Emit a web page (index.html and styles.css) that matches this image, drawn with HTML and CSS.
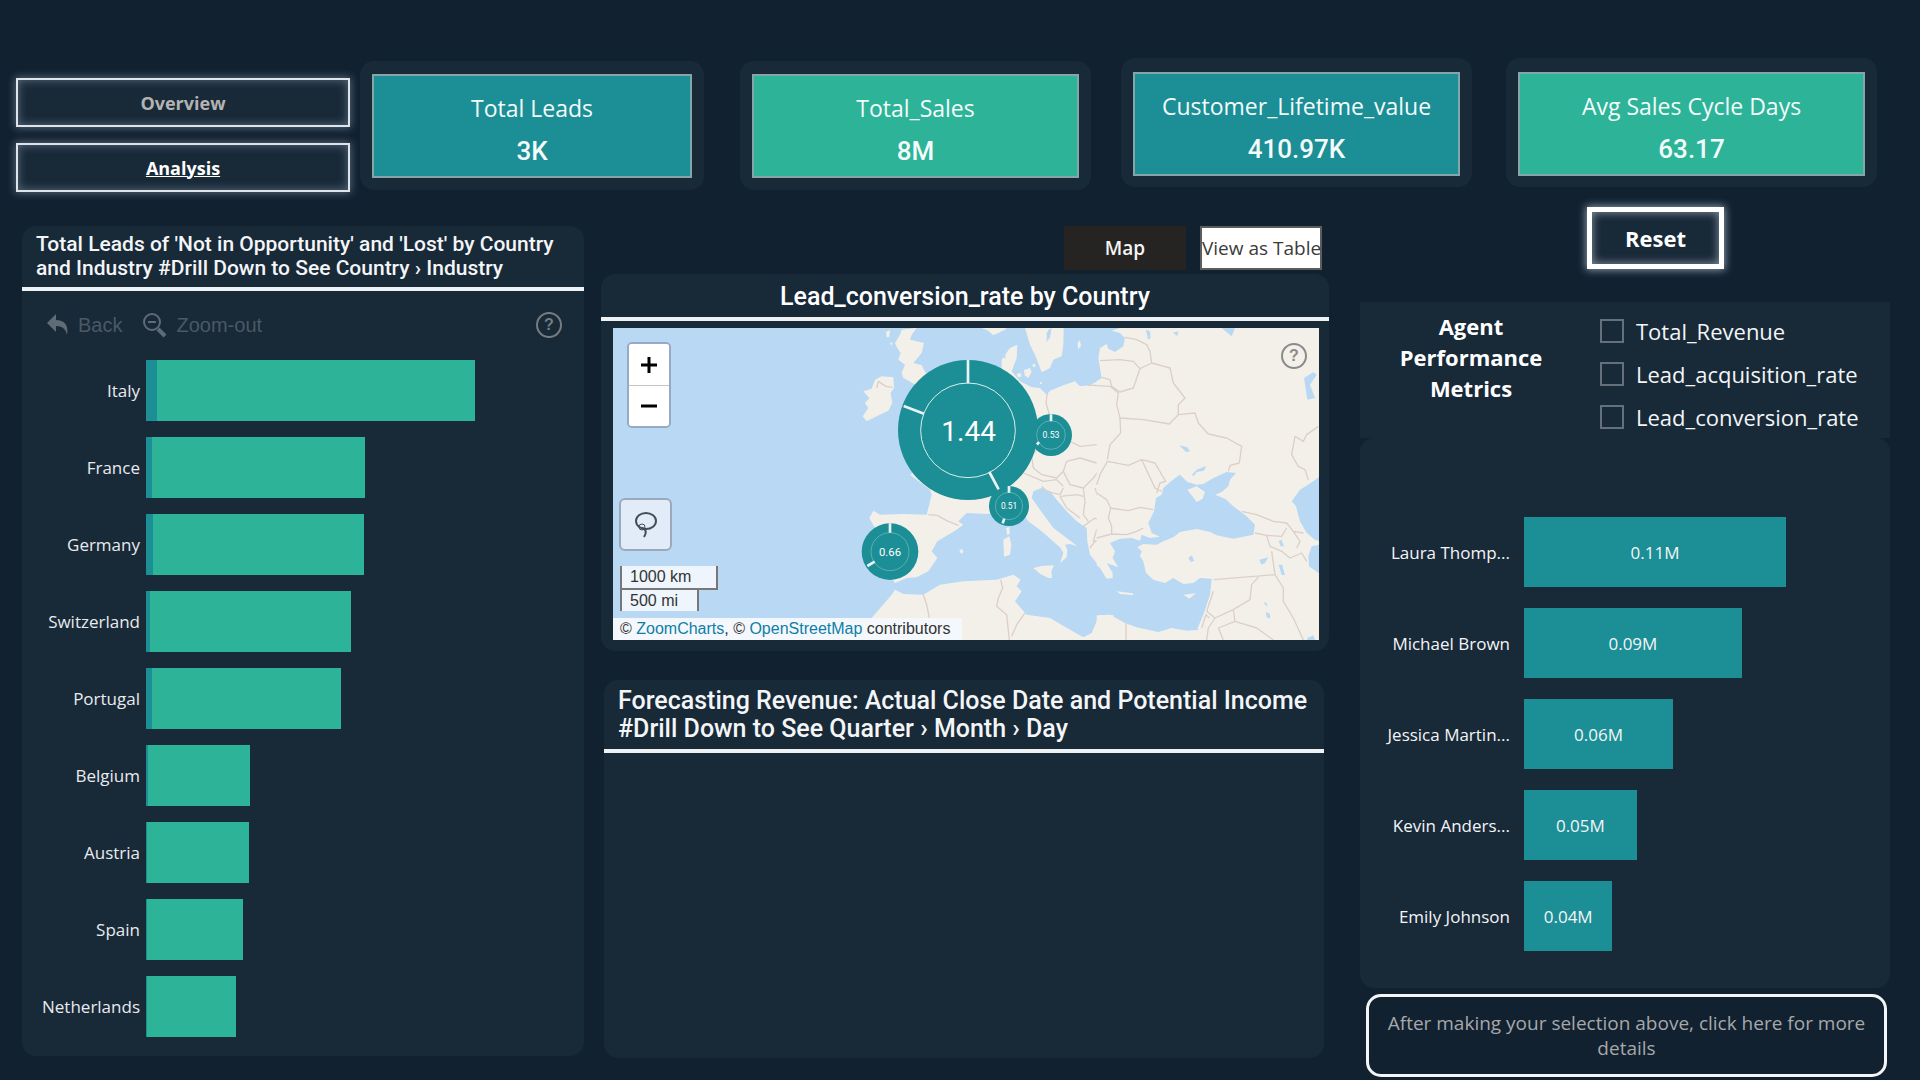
FILE: index.html
```html
<!DOCTYPE html>
<html lang="en">
<head>
<meta charset="utf-8">
<meta name="viewport" content="width=device-width, initial-scale=1">
<title>Leads Analysis</title>
<link rel="stylesheet" href="styles.css">
</head>
<body>
<header class="top">
  <nav class="nav">
    <a class="nav-link" href="#overview">Overview</a>
    <a class="nav-link nav-link--current" href="#analysis" aria-current="page">Analysis</a>
  </nav>
  <section class="kpis">
    <div class="kpi kpi--low"><div class="kpi-card"><p class="kpi-name">Total Leads</p><p class="kpi-value">3K</p></div></div>
    <div class="kpi kpi--low"><div class="kpi-card kpi-card--green"><p class="kpi-name">Total_Sales</p><p class="kpi-value">8M</p></div></div>
    <div class="kpi"><div class="kpi-card"><p class="kpi-name">Customer_Lifetime_value</p><p class="kpi-value">410.97K</p></div></div>
    <div class="kpi"><div class="kpi-card kpi-card--green"><p class="kpi-name">Avg Sales Cycle Days</p><p class="kpi-value">63.17</p></div></div>
  </section>
</header>

<main class="board">
  <section class="panel leads">
    <h2 class="panel-title panel-title--small">Total Leads of 'Not in Opportunity' and 'Lost' by Country and Industry #Drill Down to See Country › Industry</h2>
    <div class="tools">
      <button class="tool" type="button">
        <svg width="24" height="24" viewBox="0 0 24 24" aria-hidden="true"><path fill="#5f6b76" d="M10 1v6c8 0 13 5 11 15-1-6-5-9-11-9v6L1 10z"/></svg>
        Back
      </button>
      <button class="tool tool--zoom" type="button">
        <svg width="26" height="26" viewBox="0 0 26 26" fill="none" stroke="#5f6b76" aria-hidden="true"><circle cx="10" cy="10" r="8" stroke-width="2"/><path stroke-width="2" d="M6 10h8"/><path stroke-width="4" d="M16 17l7 7"/></svg>
        Zoom-out
      </button>
      <button class="help" type="button" aria-label="Help">?</button>
    </div>
    <ul class="bars">
      <li class="bar-row"><span class="bar-name">Italy</span><span class="plot"><span class="seg seg--teal" style="width:2.5%"></span><span class="seg" style="width:74.3%"></span></span></li>
      <li class="bar-row"><span class="bar-name">France</span><span class="plot"><span class="seg seg--teal" style="width:1.4%"></span><span class="seg" style="width:49.8%"></span></span></li>
      <li class="bar-row"><span class="bar-name">Germany</span><span class="plot"><span class="seg seg--teal" style="width:1.6%"></span><span class="seg" style="width:49.3%"></span></span></li>
      <li class="bar-row"><span class="bar-name">Switzerland</span><span class="plot"><span class="seg seg--teal" style="width:0.9%"></span><span class="seg" style="width:47.1%"></span></span></li>
      <li class="bar-row"><span class="bar-name">Portugal</span><span class="plot"><span class="seg seg--teal" style="width:1.4%"></span><span class="seg" style="width:44.1%"></span></span></li>
      <li class="bar-row"><span class="bar-name">Belgium</span><span class="plot"><span class="seg seg--teal" style="width:0.4%"></span><span class="seg" style="width:23.8%"></span></span></li>
      <li class="bar-row"><span class="bar-name">Austria</span><span class="plot"><span class="seg seg--teal" style="width:0.2%"></span><span class="seg" style="width:23.8%"></span></span></li>
      <li class="bar-row"><span class="bar-name">Spain</span><span class="plot"><span class="seg seg--teal" style="width:0.2%"></span><span class="seg" style="width:22.5%"></span></span></li>
      <li class="bar-row"><span class="bar-name">Netherlands</span><span class="plot"><span class="seg seg--teal" style="width:0.2%"></span><span class="seg" style="width:20.9%"></span></span></li>
    </ul>
  </section>

  <div class="middle">
    <div class="views">
      <button class="view view--on" type="button">Map</button>
      <button class="view" type="button">View as Table</button>
    </div>
    <section class="panel map-panel">
      <h2 class="panel-title panel-title--center">Lead_conversion_rate by Country</h2>
      <div class="map">
        <svg class="map-svg" viewBox="0 0 2118 936" role="img" aria-label="Map of Europe with conversion rates">
          <rect width="2118" height="936" fill="#b9d8f4"/>
          <g transform="translate(711 0)">
            <g fill="#f3f0ea">
              <path d="M745 158L720 172 690 175 675 160 640 172 600 188 590 200 570 180 545 178 510 160 485 130 500 90 502 50 480 60 455 95 455 130 470 165 430 200 350 300 300 370 180 440 240 485 245 500 230 560 160 558 90 560 70 548 58 570 75 600 78 650 60 720 80 745 125 750 135 765 170 750 200 748 235 730 262 690 245 670 262 640 320 605 340 590 325 580 350 555 410 558 440 555 480 540 520 560 535 580 575 610 615 645 632 660 640 675 630 705 650 688 652 665 645 650 660 648 682 655 650 630 610 600 570 545 545 510 550 490 575 480 600 490 620 515 650 550 680 580 710 600 712 640 720 680 740 705 752 712 765 712 765 150z"/>
              <path d="M20 936L65 870 125 800 135 785 160 798 220 800 270 770 340 760 440 755 490 740 512 755 500 775 515 790 495 820 530 860 600 870 660 905 700 928 725 915 740 880 790 860 790 936z"/>
              <path d="M150 20L155 5 200 0 185 20 180 35 222 45 215 75 190 105 215 112 230 140 250 200 160 150 155 135 165 110 145 95 152 75 142 60 135 45z"/>
              <path d="M75 155L95 145 130 148 132 180 122 195 127 225 115 248 80 265 50 280 38 265 55 240 45 225 58 210 40 190 65 182z"/>
              <path d="M395 0L415 8 430 22 465 5 470 0zM525 0L540 50 555 80 575 133 600 120 610 95 635 85 640 50 641 0zM683 45L690 37 693 55 684 64zM522 126L540 120 545 132 535 150 524 142zM500 138L512 134 514 146 504 148zM548 108L556 108 556 116 548 116zM570 163L576 163 576 168 570 168z"/>
              <path d="M460 635L478 625 484 650 480 680 462 686zM468 600L478 597 479 618 472 622zM550 720L575 714 612 712 604 730 606 750 595 750 570 737zM328 668L335 662 341 671 334 678zM108 12L120 6 118 28 110 28zM120 42L128 46 124 54z"/>
            </g>
            <g fill="#b9d8f4"><path d="M590 15L596 5 605 0 600 28 590 42zM455 85L466 78 466 92zM340 300L346 300 346 306z"/></g>
            <g fill="none" stroke="#dccfca" stroke-width="4" stroke-linejoin="round">
              <path d="M592 195L588 225 598 260M235 560L262 562 290 578 325 592M80 180L85 160 108 175 128 178M220 800L230 830 238 870M452 755L458 780 445 810 440 835 470 860 478 936M525 855L500 890 485 925M715 172L760 172M560 365L545 385 550 420 575 440 620 450 640 430 650 400M660 340L690 355 740 350 780 370M650 400L690 390 740 405 780 395M520 435L545 445 580 460 620 455 640 475M640 430L660 470 700 480 730 450 760 410M575 475L590 490 630 500 640 480M630 505L680 500 700 505M700 480L705 520 700 560 715 580M630 505L650 540 690 570M735 480L745 510 770 540M700 595L735 570 760 590 740 605 730 640 760 635M720 660L735 640 770 630"/>
            </g>
          </g>
          <g transform="translate(1461 0)">
            <path fill="#f3f0ea" d="M-10 160L5 150 0 120 -5 90 0 60 20 48 25 62 45 72 70 55 75 30 60 15 35 8 60 0 660 0 660 936 298 936 293 900 310 860 330 800 335 752 300 750 280 765 250 768 220 750 195 765 160 755 138 735 130 700 120 685 125 670 112 657 130 648 170 650 190 640 220 628 240 612 290 603 330 612 350 622 400 632 460 620 465 590 440 565 400 535 375 512 345 500 365 492 385 475 390 455 408 435 380 432 340 450 310 468 290 470 262 462 240 440 225 450 190 480 185 500 168 510 162 550 145 585 155 615 180 626 150 630 125 620 120 638 95 630 60 632 30 645 45 670 38 690 55 718 20 705 38 735 38 750 20 752 0 720 -10 712z"/>
            <g fill="#f3f0ea">
              <path d="M262 485L290 475 315 492 308 512 290 522 275 502zM50 790L98 796 100 802 60 798zM250 800L288 796 268 812z"/>
              <path d="M-10 862L30 860 75 885 110 898 175 912 215 900 260 908 302 905 302 936 -10 936z"/>
            </g>
            <path fill="#b9d8f4" d="M660 445L640 460 600 485 575 520 588 535 600 580 620 615 645 635 660 640zM635 655L625 685 627 715 660 738 660 650zM365 0L405 0 395 25zM218 14L235 10 232 24zM138 5L150 10 152 30 144 35zM612 150L640 132 650 140 630 170 645 210 622 215zM238 352L262 358 270 370 258 372zM276 440L290 425 318 414 312 428 290 432 280 445zM265 690L275 682 283 698 272 702zM478 695L505 688 495 705 484 710zM536 710L546 710 555 740 545 742zM536 640L544 635 552 655 542 655zM490 822L500 825 502 838zM498 852L510 858 510 872 500 868zM622 930L640 922 645 936 622 936z"/>
            <g fill="none" stroke="#dccfca" stroke-width="4" stroke-linejoin="round">
              <path d="M75 28L110 35 140 50 150 70 155 105 120 122 100 100 60 95 0 98M155 105L210 120 220 165 255 210 235 230 235 260 208 288 130 275 60 270 50 230 55 195 30 175 -20 172M120 122L100 180 60 192 35 175 30 155 5 148M235 260L285 255 295 285 325 318 380 330 425 355 418 405 390 412 385 430M60 270L62 315 30 350 22 395M22 400L0 440 -10 470M22 400L85 412 125 395 165 480 185 490M125 395L165 405 185 440 197 460 180 465 170 495M30 540L85 548 120 538 160 545M-10 495L20 515 32 540 25 570 35 595 35 620M35 618L80 620 110 610 130 600M-10 630L35 618M425 550L470 560 520 580 560 585 580 610 610 615M465 615L500 622 545 625 560 600M500 622L510 655 545 670 570 690 605 675 620 700M515 670L525 740 340 755M340 790L320 850 345 870 400 845 450 815 455 770 480 742M525 740L550 780 550 820 580 870 610 936M345 870L325 900 320 936M400 845L405 880 470 900 520 936M405 880L355 900 370 936M305 900L318 860 328 870M78 885L78 936M655 295L620 320 610 340 585 325 575 380 595 415 615 425 625 455M590 660L600 640 580 610"/>
            </g>
          </g>
          <g fill="#1c8e95">
            <circle cx="1314" cy="321" r="63"/>
            <circle cx="1065" cy="306" r="210"/>
            <circle cx="1188" cy="534" r="60"/>
            <circle cx="831" cy="671" r="85"/>
          </g>
          <g fill="none" stroke="#d9eeee" stroke-width="3">
            <circle cx="1065" cy="307" r="142"/>
            <circle cx="1314" cy="321" r="43" stroke-width="1"/>
            <circle cx="1188" cy="534" r="41" stroke-width="1"/>
            <circle cx="831" cy="671" r="57" stroke-width="1"/>
          </g>
          <g stroke="#e9f2f7" stroke-width="8">
            <path d="M1065 96V166M872 234L933 257M1129 432L1157 484M831 586V614M763 714L785 701M1314 259V280M1188 474V494M1169 586L1174 572M1272 350L1278 342"/>
          </g>
          <g fill="#fff" text-anchor="middle" class="map-text">
            <text x="1067" y="339" font-size="84">1.44</text>
            <text x="831" y="684" font-size="34">0.66</text>
            <text x="1314" y="330" font-size="26">0.53</text>
            <text x="1188" y="543" font-size="25">0.51</text>
          </g>
        </svg>
        <div class="zoom">
          <button class="zoom-btn" type="button" aria-label="Zoom in"><svg width="18" height="18" viewBox="0 0 18 18" stroke="#000" stroke-width="3" aria-hidden="true"><path d="M1 9h16M9 1v16"/></svg></button>
          <button class="zoom-btn" type="button" aria-label="Zoom out"><svg width="18" height="18" viewBox="0 0 18 18" stroke="#000" stroke-width="3" aria-hidden="true"><path d="M1 9h16"/></svg></button>
        </div>
        <button class="lasso" type="button" aria-label="Lasso selection">
          <svg width="26" height="28" viewBox="0 0 26 28" fill="none" stroke="#454d57" stroke-width="2" aria-hidden="true"><ellipse cx="13" cy="10" rx="10" ry="8"/><circle cx="9" cy="16" r="3" stroke-width="1"/><path d="M9 17c4 1 5 4 2 9"/></svg>
        </button>
        <div class="scale"><span class="scale-km">1000 km</span><span class="scale-mi">500 mi</span></div>
        <p class="credit">© <a href="#zoomcharts">ZoomCharts</a>, © <a href="#osm">OpenStreetMap</a> contributors</p>
        <button class="help help--map" type="button" aria-label="Map help">?</button>
      </div>
    </section>
    <section class="panel forecast">
      <h2 class="panel-title">Forecasting Revenue: Actual Close Date and Potential Income #Drill Down to See Quarter › Month › Day</h2>
    </section>
  </div>

  <div class="right">
    <button class="reset" type="button">Reset</button>
    <section class="metrics">
      <h2 class="metrics-title">Agent Performance Metrics</h2>
      <div class="checks">
        <label class="check"><input type="checkbox">Total_Revenue</label>
        <label class="check"><input type="checkbox">Lead_acquisition_rate</label>
        <label class="check"><input type="checkbox">Lead_conversion_rate</label>
      </div>
    </section>
    <section class="agents">
      <ul class="agent-list">
        <li class="agent"><span class="agent-name">Laura Thomp...</span><span class="plot"><span class="agent-bar" style="width:75.3%">0.11M</span></span></li>
        <li class="agent"><span class="agent-name">Michael Brown</span><span class="plot"><span class="agent-bar" style="width:62.6%">0.09M</span></span></li>
        <li class="agent"><span class="agent-name">Jessica Martin...</span><span class="plot"><span class="agent-bar" style="width:42.8%">0.06M</span></span></li>
        <li class="agent"><span class="agent-name">Kevin Anders...</span><span class="plot"><span class="agent-bar" style="width:32.4%">0.05M</span></span></li>
        <li class="agent"><span class="agent-name">Emily Johnson</span><span class="plot"><span class="agent-bar" style="width:25.4%">0.04M</span></span></li>
      </ul>
    </section>
    <button class="details" type="button">After making your selection above, click here for more details</button>
  </div>
</main>
</body>
</html>
```
FILE: styles.css
```css
* { box-sizing: border-box; }

body {
  margin: 0;
  min-height: 100vh;
  display: flex;
  flex-direction: column;
  background: #112130;
  color: #f3f5f7;
  font-family: "Open Sans", "Noto Sans", sans-serif;
  font-size: 16px;
}

h2, p, ul { margin: 0; padding: 0; font-weight: 400; }
ul { list-style: none; }
button { font-family: inherit; padding: 0; cursor: pointer; }

/* Header */
.top { display: flex; align-items: flex-start; gap: 10px; padding: 58px 43px 0 16px; }

.nav {
  flex: 334 1 0;
  display: flex;
  flex-direction: column;
  gap: 16px;
  padding-top: 20px;
}

.nav-link {
  height: 49px;
  display: flex;
  align-items: center;
  justify-content: center;
  border: 2px solid #dfe4ea;
  background: #182938;
  box-shadow: 0 0 8px 1px rgba(190, 205, 225, .4), inset 0 0 8px 1px rgba(190, 205, 225, .35);
  color: #b3b3b3;
  font-size: 18px;
  font-weight: 700;
  text-decoration: none;
}

.nav-link--current { color: #fff; text-decoration: underline; }

.kpis {
  flex: 1517 1 0;
  display: grid;
  grid-template-columns: 344fr 36fr 351fr 30fr 351fr 34fr 371fr;
}

.kpi {
  margin-bottom: 3px;
  padding: 14px 12px 11px;
  border-radius: 14px;
  background: #182938;
}

.kpi:nth-child(2) { grid-column: 3; }
.kpi:nth-child(3) { grid-column: 5; }
.kpi:nth-child(4) { grid-column: 7; }
.kpi--low { margin: 3px 0 0; padding-top: 13px; padding-bottom: 12px; }

.kpi-card {
  height: 104px;
  display: flex;
  flex-direction: column;
  align-items: center;
  justify-content: center;
  gap: 11px;
  padding-top: 7px;
  border: 2px solid #86a5a9;
  background: #1c8e95;
  color: #f3fbfb;
}

.kpi-card--green { background: #2db398; }
.kpi-name { font-size: 23px; line-height: 32px; }
.kpi-value { font-family: Roboto, sans-serif; font-size: 26px; font-weight: 500; line-height: 32px; }

/* Board */
.board {
  flex: 1;
  display: grid;
  grid-template-columns: 562fr 17fr 728fr 31fr 530fr;
  padding: 0 30px 3px 22px;
}

.panel { border-radius: 14px; background: #182938; }

.panel-title {
  padding: 7px 12px 6px 14px;
  border-bottom: 4px solid #eef2f5;
  font-family: Roboto, sans-serif;
  font-size: 25px;
  font-weight: 500;
  line-height: 28px;
}

.panel-title--center { text-align: center; padding: 9px 0 6px; color: #fff; }
.panel-title--small { font-size: 21px; line-height: 24px; padding: 6px 12px 7px 14px; }

.leads { grid-column: 1; margin: 34px 0 21px; }

.tools { display: flex; align-items: center; padding: 21px 22px 22px 24px; }

.tool {
  display: flex;
  align-items: center;
  gap: 8px;
  border: 0;
  background: none;
  color: #4c5865;
  font-family: "Liberation Sans", Arial, sans-serif;
  font-size: 20px;
}

.tool--zoom { margin-left: 20px; }

.help {
  width: 26px;
  height: 26px;
  margin-left: auto;
  border: 2px solid #777c81;
  border-radius: 50%;
  background: none;
  color: #777c81;
  font-family: "Liberation Sans", Arial, sans-serif;
  font-size: 16px;
  font-weight: 700;
  line-height: 20px;
}

.bars { display: flex; flex-direction: column; gap: 16px; padding-right: 10px; }
.bar-row { display: flex; align-items: center; gap: 6px; height: 61px; }
.bar-name { width: 118px; text-align: right; font-size: 17px; color: #e8ebee; }
.plot { flex: 1; height: 100%; display: flex; }
.seg { background: #2db398; }
.seg--teal { background: #1c8e95; }

/* Middle column */
.middle { grid-column: 3; display: flex; flex-direction: column; padding: 34px 0 19px; }
.views { display: flex; justify-content: flex-end; gap: 14px; padding-right: 7px; margin-bottom: 4px; }

.view {
  width: 122px;
  height: 44px;
  border: 2px solid #5d5d5d;
  background: #fff;
  color: #3b3b3b;
  font-size: 19px;
  white-space: nowrap;
}

.view--on { border-color: #252423; background: #252423; color: #f5f5f5; font-weight: 600; }

.map-panel { padding-bottom: 11px; }
.map { position: relative; margin: 7px 10px 0 12px; }
.map-svg { display: block; width: 100%; height: auto; }
.map-text { font-family: Roboto, sans-serif; }

.zoom {
  position: absolute;
  left: 14px;
  top: 14px;
  border: 2px solid #98a9c4;
  border-radius: 5px;
  background: #fff;
  overflow: hidden;
}

.zoom-btn {
  width: 40px;
  height: 41px;
  display: grid;
  place-items: center;
  border: 0;
  background: #fff;
}

.zoom-btn + .zoom-btn { border-top: 1px solid #c4c4c4; }

.lasso {
  position: absolute;
  left: 6px;
  top: 170px;
  width: 53px;
  height: 53px;
  display: grid;
  place-items: center;
  border: 2px solid #9ba9bb;
  border-radius: 6px;
  background: #e1ecf8;
}

.scale {
  position: absolute;
  left: 7px;
  bottom: 29px;
  display: flex;
  flex-direction: column;
  align-items: flex-start;
  color: #333;
  font: 16px/22px "Liberation Sans", Arial, sans-serif;
}

.scale span { padding: 0 8px; border: 2px solid #777; border-top: 0; background: #eef5fd; }
.scale-km { width: 98px; height: 24px; }
.scale .scale-mi { width: 79px; height: 21px; border-bottom: 0; line-height: 21px; }

.credit {
  position: absolute;
  left: 0;
  bottom: 0;
  padding: 0 12px 0 7px;
  background: #f4f8fc;
  color: #333;
  font: 16px/22px "Liberation Sans", Arial, sans-serif;
}

.credit a { color: #0f7da8; text-decoration: none; }
.help--map { position: absolute; right: 12px; top: 15px; border-color: #8b8a88; color: #8b8a88; }

.forecast { flex: 1; margin: 29px 5px 0 3px; }

/* Right column */
.right { grid-column: 5; display: flex; flex-direction: column; padding-top: 15px; }

.reset {
  align-self: center;
  width: 137px;
  height: 62px;
  margin: 0 0 33px 61px;
  border: 5px solid #fff;
  background: #182938;
  box-shadow: 0 0 8px 1px rgba(225, 235, 250, .6), inset 0 0 8px 1px rgba(225, 235, 250, .5);
  color: #fff;
  font-size: 22px;
  font-weight: 700;
}

.metrics { display: flex; height: 136px; background: #182938; }

.metrics-title {
  width: 222px;
  padding: 9px 30px 0;
  color: #fff;
  font-size: 22px;
  font-weight: 700;
  line-height: 31px;
  text-align: center;
}

.checks { display: flex; flex-direction: column; padding: 7px 0 0 18px; }
.check { display: flex; align-items: center; gap: 12px; height: 44px; font-size: 22px; }

.check input {
  appearance: none;
  width: 24px;
  height: 24px;
  margin: 0;
  border: 2px solid #66707a;
}

.agents { flex: 1; padding: 79px 18px 37px 0; border-radius: 14px; background: #182938; }
.agent-list { display: flex; flex-direction: column; gap: 21px; }
.agent { display: flex; align-items: center; gap: 14px; height: 70px; }
.agent-name { width: 150px; text-align: right; font-size: 17px; }

.agent-bar {
  display: flex;
  align-items: center;
  justify-content: center;
  background: #1c8e95;
  font-size: 17px;
}

.details {
  height: 83px;
  margin: 6px 3px 0 6px;
  padding: 0 12px;
  border: 3px solid #f3f5f7;
  border-radius: 15px;
  background: #112130;
  color: #a6a8aa;
  font-size: 19px;
  line-height: 25px;
}
```
